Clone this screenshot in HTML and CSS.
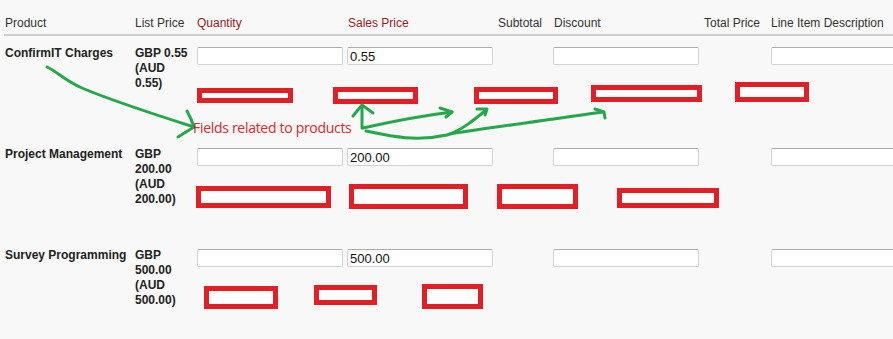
FILE: index.html
```html
<!DOCTYPE html>
<html>
<head>
<meta charset="utf-8">
<link rel="stylesheet" href="styles.css">
</head>
<body>
<div class="page">
  <table class="items">
    <colgroup>
      <col class="c-product"><col class="c-list"><col class="c-qty"><col class="c-sales">
      <col class="c-sub"><col class="c-disc"><col class="c-total"><col class="c-desc">
    </colgroup>
    <thead>
      <tr>
        <th>Product</th>
        <th>List Price</th>
        <th class="req">Quantity</th>
        <th class="req">Sales Price</th>
        <th>Subtotal</th>
        <th>Discount</th>
        <th>Total Price</th>
        <th>Line Item Description</th>
      </tr>
    </thead>
    <tbody>
      <tr>
        <td class="name">ConfirmIT Charges</td>
        <td class="price">GBP 0.55 (AUD 0.55)</td>
        <td><input class="field qty" type="text" value=""></td>
        <td><input class="field" type="text" value="0.55"></td>
        <td></td>
        <td><input class="field" type="text" value=""></td>
        <td></td>
        <td><input class="field wide" type="text" value=""></td>
      </tr>
      <tr>
        <td class="name">Project Management</td>
        <td class="price">GBP 200.00 (AUD 200.00)</td>
        <td><input class="field qty" type="text" value=""></td>
        <td><input class="field" type="text" value="200.00"></td>
        <td></td>
        <td><input class="field" type="text" value=""></td>
        <td></td>
        <td><input class="field wide" type="text" value=""></td>
      </tr>
      <tr>
        <td class="name">Survey Programming</td>
        <td class="price">GBP 500.00 (AUD 500.00)</td>
        <td><input class="field qty" type="text" value=""></td>
        <td><input class="field" type="text" value="500.00"></td>
        <td></td>
        <td><input class="field" type="text" value=""></td>
        <td></td>
        <td><input class="field wide" type="text" value=""></td>
      </tr>
    </tbody>
  </table>

  <svg class="markup" width="893" height="339" viewBox="0 0 893 339">
    <g class="boxes">
      <rect x="199.5" y="90.5" width="91" height="10"/>
      <rect x="335.5" y="89.5" width="80" height="12"/>
      <rect x="476.5" y="89.5" width="79" height="12"/>
      <rect x="593.5" y="87.5" width="106" height="12"/>
      <rect x="737.5" y="84.5" width="69" height="15"/>

      <rect x="198.5" y="188.5" width="130" height="17"/>
      <rect x="351.5" y="186.5" width="114" height="20"/>
      <rect x="499.5" y="186.5" width="76" height="20"/>
      <rect x="619.5" y="190.5" width="97" height="15"/>

      <rect x="206.5" y="288.5" width="69" height="18"/>
      <rect x="316.5" y="287.5" width="58" height="15"/>
      <rect x="424.5" y="286.5" width="56" height="20"/>
    </g>
    <g class="arrows">
      <path d="M47,67 C56,71 66,81 82,88 C110,100 150,113 194,127"/>
      <path d="M187,111 Q191,118 194,127 L178,137"/>

      <path d="M362,128 L362,106"/>
      <path d="M353,116 L362,105 L373,113"/>

      <path d="M363,128 C385,123 420,116 452,112"/>
      <path d="M440,108 L452,112 L446,117"/>

      <path d="M366,131 C390,136 415,142 447,135 C462,130 474,120 486,110"/>
      <path d="M477,109 L487,109 L485,115"/>

      <path d="M450,134 C487,128 540,121 603,112"/>
      <path d="M595,109 L604,112 L605,118"/>
    </g>
  </svg>
  <div class="note">Fields related to products</div>
</div>
</body>
</html>
```

FILE: styles.css
```css
html, body {
  margin: 0;
  padding: 0;
  overflow: hidden;
  background: #f8f8f8;
}

.page {
  position: relative;
  width: 893px;
  height: 339px;
  overflow: hidden;
  font-family: "Liberation Sans", Arial, sans-serif;
  font-size: 12px;
  color: #333;
}

.items {
  border-collapse: collapse;
  table-layout: fixed;
  width: 1020px;
  margin-left: 4px;
}

.c-product { width: 130px; }
.c-list { width: 62px; }
.c-qty { width: 151px; }
.c-sales { width: 150px; }
.c-sub { width: 56px; }
.c-disc { width: 150px; }
.c-total { width: 67px; }
.c-desc { width: 254px; }

.items th {
  text-align: left;
  font-weight: normal;
  color: #333;
  line-height: 15px;
  padding: 16px 0 3px 1px;
  border-bottom: 2px solid #cfcfcf;
  white-space: nowrap;
}

.items th.req {
  color: #9a1b1b;
}

.items td {
  vertical-align: top;
  padding: 10px 0 0 0;
  height: 91px;
  line-height: 15px;
}

.items td.name,
.items td.price {
  font-weight: bold;
  color: #222;
  padding-left: 1px;
}

.items td.price {
  padding-right: 5px;
}

.field {
  display: block;
  box-sizing: border-box;
  width: 146px;
  height: 18px;
  margin: 1px 0 0 0;
  padding: 0 2px;
  border: 1px solid #d2d2d2;
  border-top-color: #ababab;
  border-radius: 2px;
  background: #fff;
  font-family: "Liberation Sans", Arial, sans-serif;
  font-size: 13px;
  color: #111;
  outline: none;
}

.field.qty {
  margin-left: 1px;
}

.field.wide {
  width: 200px;
  margin-left: 1px;
}

.markup {
  position: absolute;
  left: 0;
  top: 0;
  pointer-events: none;
}

.boxes rect {
  fill: #fdfdfd;
  stroke: #e31f26;
  stroke-width: 5;
}

.arrows path {
  fill: none;
  stroke: #24a84a;
  stroke-width: 3;
  stroke-linecap: round;
  stroke-linejoin: round;
}

.note {
  position: absolute;
  left: 193px;
  top: 119px;
  font-family: "Open Sans", sans-serif;
  font-size: 14px;
  letter-spacing: -0.3px;
  line-height: 18px;
  color: #d9272e;
  white-space: nowrap;
}
```
